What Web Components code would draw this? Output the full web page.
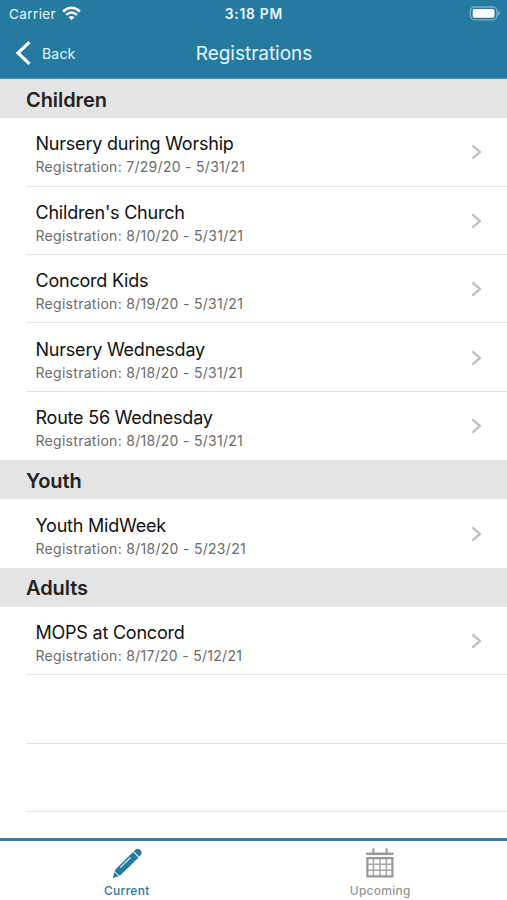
<!DOCTYPE html>
<html lang="en">
<head>
<meta charset="utf-8">
<title>Registrations</title>
<style>
html,body{margin:0;height:100%;background:#fff;overflow:hidden}
body{font-family:Inter,"Liberation Sans",sans-serif}
</style>
</head>
<body>
<app-screen>
  <status-bar slot="top" carrier="Carrier" time="3:18 PM"></status-bar>
  <nav-bar slot="top" back="Back">Registrations</nav-bar>
  <list-section>Children</list-section>
  <list-row dates="7/29/20 - 5/31/21">Nursery during Worship</list-row>
  <list-row dates="8/10/20 - 5/31/21">Children's Church</list-row>
  <list-row dates="8/19/20 - 5/31/21">Concord Kids</list-row>
  <list-row dates="8/18/20 - 5/31/21">Nursery Wednesday</list-row>
  <list-row dates="8/18/20 - 5/31/21" last>Route 56 Wednesday</list-row>
  <list-section>Youth</list-section>
  <list-row dates="8/18/20 - 5/23/21" last>Youth MidWeek</list-row>
  <list-section>Adults</list-section>
  <list-row dates="8/17/20 - 5/12/21">MOPS at Concord</list-row>
  <list-row></list-row>
  <list-row></list-row>
  <tab-bar slot="bottom">
    <tab-item active>
      <svg slot="icon" width="32" height="32" viewBox="0 0 32 32" fill="currentColor"><path d="M1.8 30.9 3.4 25.3 7.6 29.3Z"/><path d="M3.8 24.4 4.4 22.4 22 5 27.6 10.4 10 27.8 8 28.5Z"/><path d="M22.7 4.3 24.8 2.4Q26.6 1 28.6 2.4L29.9 3.7Q31.5 5.7 30.1 7.6L28.2 9.8Z"/><path d="M9.2 20.6 19.6 10.5" stroke="#d6e8f0" stroke-width="1.3" fill="none"/></svg>
      Current</tab-item>
    <tab-item>
      <svg slot="icon" width="32" height="32" viewBox="0 0 32 32" fill="none" stroke="currentColor"><path d="M9.4 1.3V6M22.6 1.3V6" stroke-width="2"/><path d="M2.3 6.8H29.5" stroke-width="2.6"/><path d="M3.4 11.1H28.4V29.4H3.4Z" stroke-width="2.2"/><path d="M9.5 11V29M15.9 11V29M22.3 11V29M3 17.2H29M3 23.2H29" stroke-width="1.5" opacity=".85"/></svg>
      Upcoming</tab-item>
  </tab-bar>
</app-screen>
<script>
const define = (name, html) => customElements.define(name, class extends HTMLElement {
  constructor() {
    super();
    this.attachShadow({ mode: 'open' }).innerHTML =
      html.replace(/\{(\w+)\}/g, (_, key) => this.getAttribute(key) || '');
  }
});

define('app-screen', `<style>
:host{display:flex;flex-direction:column;height:900px;width:100%;background:#fff}
header{background:#257aa0;height:79px;flex:none;box-sizing:border-box;border-bottom:1px solid #4a94b6}
main{flex:1;min-height:0;overflow:hidden}
</style><header><slot name="top"></slot></header><main><slot></slot></main><slot name="bottom"></slot>`);

define('status-bar', `<style>
:host{display:grid;grid-template-columns:1fr auto 1fr;height:27px;align-items:center;color:#eaf8fe;font-size:13.5px;padding:0 7px 0 9px}
.carrier{display:flex;align-items:center;gap:6px;letter-spacing:.4px}
.time{font-weight:600;font-size:13.8px;letter-spacing:.75px;margin-right:-.75px;position:relative;left:-1px}
.battery{justify-self:end}
svg{display:block}
</style>
<span class="carrier"><span>{carrier}</span><svg width="19" height="15" viewBox="0 0 19 15" fill="none" stroke="#fff" stroke-width="2.5"><path d="M1.1 5.5Q9.5-2 17.9 5.5"/><path d="M4.1 8.9Q9.5 4 14.9 8.9"/><path d="M9.5 14.2 6.5 11.2Q9.5 8.7 12.5 11.2Z" fill="#fff" stroke="none"/></svg></span>
<span class="time">{time}</span>
<svg class="battery" width="31" height="16" viewBox="0 0 31 16"><rect x="1.4" y="1" width="26.5" height="12.8" rx="4" fill="none" stroke="#7bb0c9" stroke-width="1.3"/><rect x="3.7" y="3.1" width="21.8" height="8.6" rx="1.7" fill="#fff"/><path d="M28.7 5.2Q30.9 5.8 30.9 7.4T28.7 9.8Z" fill="#7bb0c9"/></svg>`);

define('nav-bar', `<style>
:host{display:grid;grid-template-columns:1fr auto 1fr;height:52px;align-items:center;color:#e6f6fd;padding:0 14px 0 15px;font-size:19px;letter-spacing:-.03px}
.back{display:flex;align-items:center;gap:10px;font-size:14px;letter-spacing:.2px}
svg{display:block}
</style><span class="back"><svg width="17" height="26" viewBox="0 0 17 26" fill="none" stroke="#fff" stroke-width="3.2"><path d="M14.5 2.2 3 13 14.5 23.8"/></svg><span>{back}</span></span><span><slot></slot></span>`);

define('list-section', `<style>
:host{display:flex;align-items:center;height:39.2px;background:#e4e4e4;padding-left:26px;color:#222;font-size:20px;font-weight:600;line-height:24px;letter-spacing:-.08px;box-sizing:border-box;padding-top:2px}
</style><span><slot></slot></span>`);

define('list-row', `<style>
:host{display:flex;box-sizing:border-box;height:68.4px;margin-left:26px;padding:15.3px 23px 0 9.5px;border-bottom:1px solid #e6e6e6;justify-content:space-between}
:host([last]){border-bottom-color:transparent}
:host(:not([dates])) div,:host(:not([dates])) svg{display:none}
.title{font-size:18px;line-height:22px;color:#111;letter-spacing:-.22px}
.dates{font-size:14px;line-height:18px;color:#6b6b6b;margin-top:2.9px;letter-spacing:.29px}
svg{display:block;margin-top:10px}
</style><div><div class="title"><slot></slot></div><div class="dates">Registration: {dates}</div></div>
<svg width="15" height="18" viewBox="0 0 15 18" fill="none" stroke="#c0c0c0" stroke-width="2.3"><path d="M3.4 2.3 10.9 9 3.4 15.7"/></svg>`);

define('tab-bar', `<style>
:host{display:grid;grid-template-columns:1fr 1fr;height:62.5px;flex:none;box-sizing:border-box;border-top:3px solid #397fa2;background:#fff}
</style><slot></slot>`);

define('tab-item', `<style>
:host{display:flex;flex-direction:column;align-items:center;color:#989898;font-size:12px;font-weight:500;line-height:16px;padding-top:6px;letter-spacing:.27px}
:host([active]){color:#257aa0}
::slotted(svg){display:block}
.label{margin-top:4.5px}
</style><slot name="icon"></slot><span class="label"><slot></slot></span>`);
</script>
</body>
</html>
